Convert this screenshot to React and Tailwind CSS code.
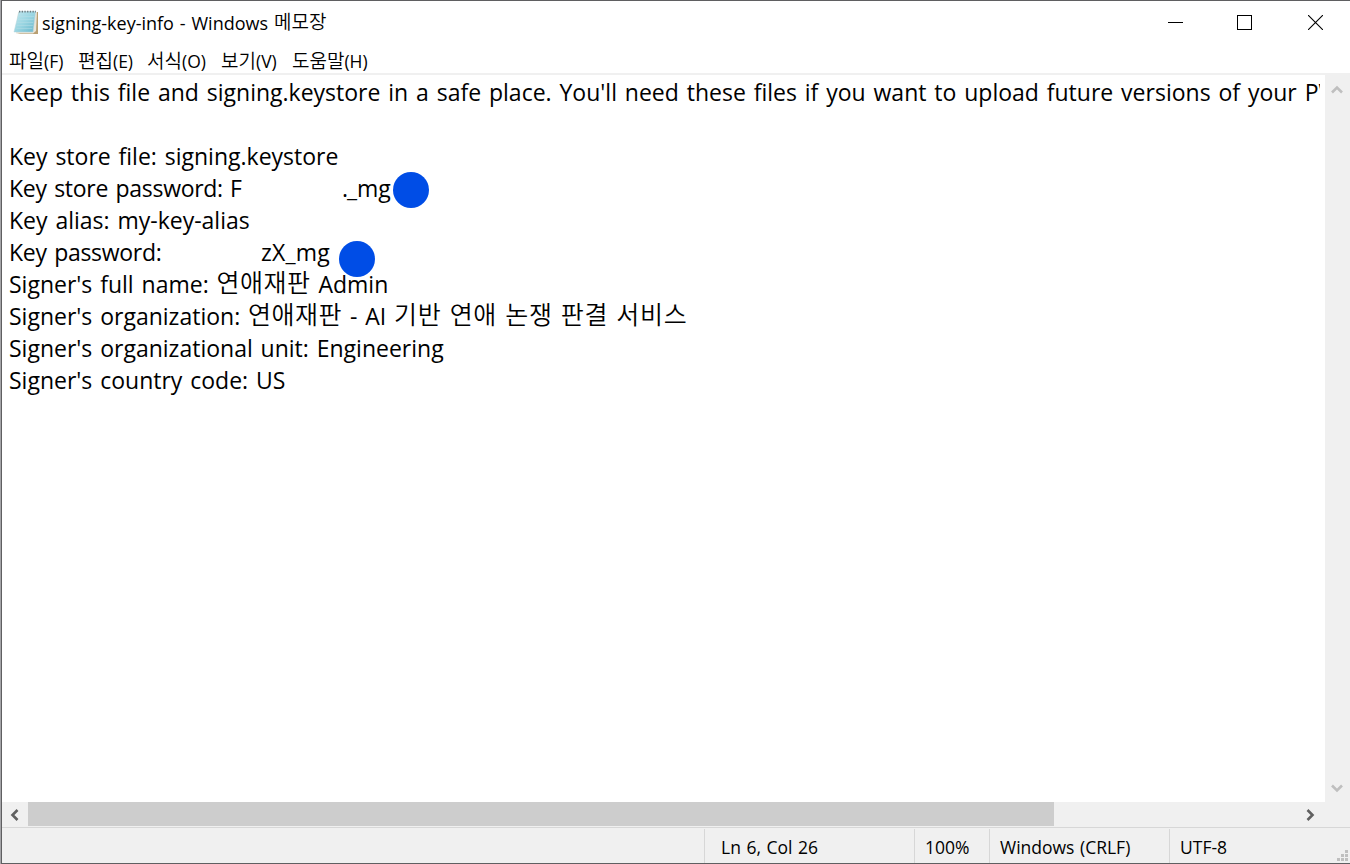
const menus = [
  { name: "파일", hotkey: "(F)", width: "w-[69px]" },
  { name: "편집", hotkey: "(E)", width: "w-[69px]" },
  { name: "서식", hotkey: "(O)", width: "w-[74px]" },
  { name: "보기", hotkey: "(V)", width: "w-[71px]" },
  { name: "도움말", hotkey: "(H)", width: "w-[90px]" },
];

function Hangul({ className = "", children }) {
  return (
    <span
      className={`relative font-['Noto_Sans_CJK_KR',sans-serif] leading-none font-[350] ${className}`}
    >
      {children}
    </span>
  );
}

function NotepadIcon() {
  return (
    <svg className="h-[26px] w-[26px]" viewBox="0 0 26 26">
      <defs>
        <linearGradient id="page" x1="0" y1="0" x2="1" y2="1">
          <stop offset="0" stopColor="#c4e8ef" />
          <stop offset="0.5" stopColor="#9bd6e2" />
          <stop offset="1" stopColor="#68b6cb" />
        </linearGradient>
      </defs>
      <path d="M22 3 H25 V25 H7 L4 24 Z" fill="#b99f72" />
      <path d="M5 3 H24 L23 22 L20 24.5 H3 Z" fill="#e8e4d8" />
      <path d="M6 2.5 H22.5 L20 23 H1 Z" fill="url(#page)" stroke="#b5d5dc" strokeWidth="0.5" />
      <path
        d="M5 7.5 H21 M4.7 10.5 H20.6 M4.3 13.5 H20.2 M3.8 16.5 H19.8 M3.4 19.5 H19.4"
        stroke="#b8dfe7"
        strokeWidth="0.5"
      />
      <path d="M6 2.7 H23" stroke="#6b7a7f" strokeWidth="1.8" strokeDasharray="1.3 1.4" />
    </svg>
  );
}

function TitleBar() {
  return (
    <header className="flex h-[46px] items-start">
      <div className="flex pt-2 pl-[11px]">
        <NotepadIcon />
        <h1 className="ml-[3px] text-[18px] leading-[28px] [word-spacing:1.2px] whitespace-pre">
          signing-key-info - Windows <Hangul className="-top-px text-[19px]">메모장</Hangul>
        </h1>
      </div>
      <div className="ml-auto flex pt-[14px] pr-[27px]">
        <button className="mr-[54px] h-[15px] w-[15px]" type="button" aria-label="Minimize">
          <svg className="h-[15px] w-[15px]" viewBox="0 0 15 15" shapeRendering="crispEdges">
            <path d="M0 7.5 H15" stroke="black" />
          </svg>
        </button>
        <button
          className="mr-[56px] h-[15px] w-[15px] border border-black"
          type="button"
          aria-label="Maximize"
        ></button>
        <button className="h-[15px] w-[15px]" type="button" aria-label="Close">
          <svg className="h-[15px] w-[15px]" viewBox="0 0 15 15">
            <path d="M0 0 L15 15 M15 0 L0 15" stroke="black" strokeWidth="1.1" />
          </svg>
        </button>
      </div>
    </header>
  );
}

function Document() {
  return (
    <main className="min-w-0 flex-1 overflow-hidden pt-px pr-[5px] pl-[7px] text-[23px] leading-8 [word-spacing:1.9px] whitespace-pre">
      <div className="h-8 overflow-hidden">
        Keep this file and signing.keystore in a safe place. You'll need these files if you want to upload future versions of your PWA
      </div>
      <div className="h-8"></div>
      <div className="h-8">Key store file: signing.keystore</div>
      <div className="flex h-8">
        <span className="w-[221px] tracking-[-0.3px]">Key store password:</span>
        <span className="w-[112px]">F</span>
        <span className="w-[5px]">.</span>
        <span className="w-[46px]">_mg</span>
        <span className="h-9 w-9 shrink-0 rounded-full bg-[#004de6]"></span>
      </div>
      <div className="h-8">Key alias: my-key-alias</div>
      <div className="flex h-8">
        <span className="w-[252px] tracking-[-0.3px]">Key password:</span>
        <span className="w-[78px] tracking-[0.2px]">zX_mg</span>
        <span className="mt-[5px] h-9 w-9 shrink-0 rounded-full bg-[#004de6]"></span>
      </div>
      <div className="h-8">
        Signer's full name:{" "}
        <Hangul className="-top-px text-[25px] tracking-[0.5px]">연애재판</Hangul> Admin
      </div>
      <div className="h-8">
        Signer's organization:{" "}
        <Hangul className="-top-px text-[25px] tracking-[0.5px]">연애재판</Hangul> - AI{" "}
        <Hangul className="-top-px text-[25px] tracking-[0.7px]">기반 연애 논쟁 판결 서비스</Hangul>
      </div>
      <div className="h-8">Signer's organizational unit: Engineering</div>
      <div className="h-8">Signer's country code: US</div>
    </main>
  );
}

function StatusBar() {
  return (
    <footer className="flex h-9 border-t border-[#d7d7d7] bg-[#f0f0f0] pt-px text-[17.5px] leading-[37px] [word-spacing:1px] whitespace-pre">
      <div className="w-[703px] border-r border-[#d7d7d7]"></div>
      <div className="w-[210px] border-r border-[#d7d7d7] pl-4">Ln 6, Col 26</div>
      <div className="w-[75px] border-r border-[#d7d7d7] pl-[10px]">100%</div>
      <div className="w-[180px] border-r border-[#d7d7d7] pl-[10px]">Windows (CRLF)</div>
      <div className="flex flex-1 justify-between pl-[10px]">
        <span>UTF-8</span>
        <svg className="mt-[21px] mr-[2px] h-[11px] w-[11px]" viewBox="0 0 11 11" fill="#bfbfbf">
          <path d="M8 0h3v3h-3z M4 4h3v3h-3z M8 4h3v3h-3z M0 8h3v3h-3z M4 8h3v3h-3z M8 8h3v3h-3z" />
        </svg>
      </div>
    </footer>
  );
}

export default function App() {
  return (
    <div className="flex h-[864px] w-[1350px] overflow-hidden bg-white font-['Open_Sans','Noto_Sans_CJK_KR',sans-serif] text-black">
      <div className="w-px bg-[#a5a5a8]"></div>
      <div className="flex min-w-0 flex-1 flex-col border-y border-l border-[#5f5f61]">
        <TitleBar />
        <nav className="flex h-[28px] border-b-2 border-[#f0f0f0] pl-[7px] text-[17.5px] leading-[28px]">
          {menus.map((menu) => (
            <div className={`shrink-0 whitespace-nowrap ${menu.width}`} key={menu.name}>
              <Hangul className="text-[19px]">{menu.name}</Hangul>
              {menu.hotkey}
            </div>
          ))}
        </nav>
        <div className="flex min-h-0 flex-1">
          <Document />
          <div className="flex w-[25px] shrink-0 flex-col items-center justify-between bg-[#f0f0f0] pt-[10px] pr-px pb-[9px]">
            <svg className="h-[10px] w-3" viewBox="0 0 12 10" fill="none">
              <path d="M1 7.5 L6 2.5 L11 7.5" stroke="#bfbfbf" strokeWidth="2.6" />
            </svg>
            <svg className="h-[10px] w-3" viewBox="0 0 12 10" fill="none">
              <path d="M1 2.5 L6 7.5 L11 2.5" stroke="#bfbfbf" strokeWidth="2.6" />
            </svg>
          </div>
        </div>
        <div className="flex h-[25px] shrink-0 items-start bg-[#f0f0f0]">
          <div className="flex h-[25px] w-[26px] items-center pl-[8px]">
            <svg className="h-3 w-[10px]" viewBox="0 0 10 12" fill="none">
              <path d="M7.5 1 L2.5 6 L7.5 11" stroke="#606060" strokeWidth="2.6" />
            </svg>
          </div>
          <div className="h-6 w-[1026px] bg-[#cdcdcd]"></div>
          <div className="ml-auto flex h-[25px] w-[45px] items-center">
            <svg className="h-3 w-[10px]" viewBox="0 0 10 12" fill="none">
              <path d="M2.5 1 L7.5 6 L2.5 11" stroke="#606060" strokeWidth="2.6" />
            </svg>
          </div>
        </div>
        <StatusBar />
      </div>
    </div>
  );
}
